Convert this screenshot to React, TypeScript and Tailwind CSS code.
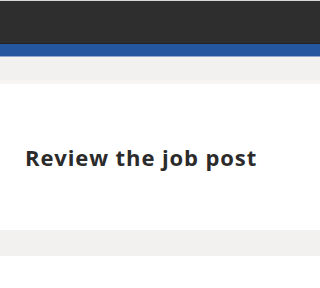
export default function App() {
  return (
    <div className="min-h-[288px] bg-white" style={{ fontFamily: '"Open Sans", sans-serif' }}>
      <div className="h-px bg-[#d6d6d6]" />
      <div className="h-[43px] bg-[#2e2e2e] border-b border-[#232323]" />
      <div className="h-[13px] bg-[#2456a0] border-b border-[#8ea8cc]" />
      <div className="h-[23px] bg-[#f2f1ef]" />
      <div className="h-[4px] bg-[#f7f6f5]" />
      <div className="h-[146px] pl-[25px] pt-[58px]">
        <h1 className="whitespace-nowrap text-[22px] font-bold leading-[30px] tracking-[0.9px] text-[#2b2b2b]">
          Review the job post
        </h1>
      </div>
      <div className="h-[26px] bg-[#f2f1ef]" />
    </div>
  )
}
